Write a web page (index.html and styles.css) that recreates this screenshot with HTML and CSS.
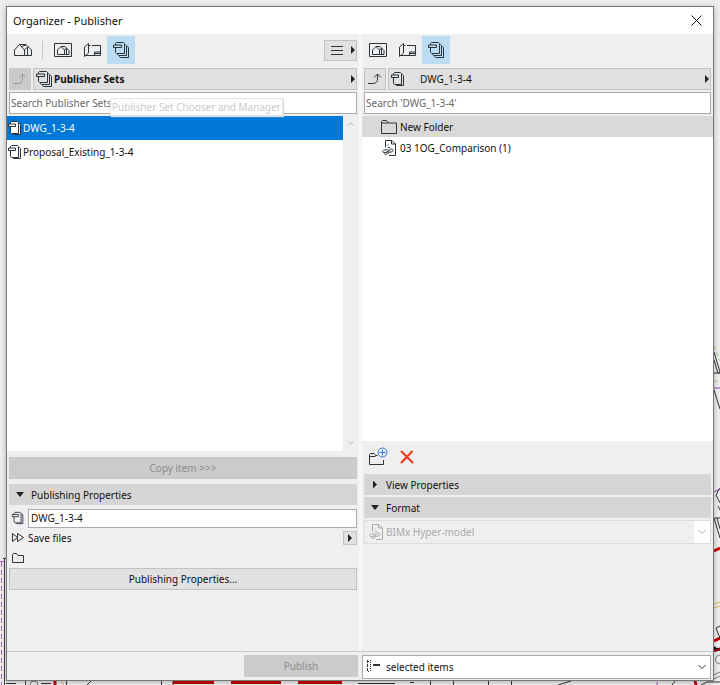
FILE: index.html
```html
<!DOCTYPE html>
<html lang="en">
<head>
  <meta charset="utf-8">
  <title>Organizer - Publisher</title>
  <link rel="stylesheet" href="styles.css">
</head>
<body>
  <svg class="symbols" aria-hidden="true">
    <symbol id="house" viewBox="0 0 20 16">
      <path d="M1.500 13.500V8L6.500 2.500L11.500 8v5.500zM6.500 2.500h6.500L18.500 8v5.500h-7M8.500 4.500L13 3M11.500 8L14.500 5v8.500"/>
    </symbol>
    <symbol id="view-map" viewBox="0 0 20 16">
      <path d="M1.500 1.500h17v13h-17zM4.500 12.500V8L8 4.500l3.500 3.500v4.500zM8 4.500h4L16 8.500v4h-4.500M11.500 8L13.500 6v6.500"/>
    </symbol>
    <symbol id="layout" viewBox="0 0 20 16">
      <path d="M6.500 1.500L2.500 5v9.500L6.500 11zM6.500 3.500h2M10 3.500h8.500v10H3.500M12.500 13.500v-3.500h6M12.500 11.500h6"/>
    </symbol>
    <symbol id="sets" viewBox="0 0 18 18">
      <path d="M3.500 4V2.500l1-1h7l1 1v10H4.500l-1-1V6.500M1.500 4h8v2.500h-8zM12.500 3.500h1l1 1v10h-8l-1-1v-1M14.500 5.500h1l1 1v10h-8l-1-1v-1"/>
    </symbol>
    <symbol id="set" viewBox="0 0 16 16">
      <path d="M3.500 4V2.500l1-1h6l1 1v11h-7l-1-1V6.500M1.500 4h7v2.500h-7zM11.500 3.500h1l1 1v10h-7l-1-1"/>
    </symbol>
    <symbol id="up" viewBox="0 0 16 14">
      <path d="M1 11.500h5c3 0 4.500-2 4.500-4.500V2M7 5.500l3.500-3.500 3.500 3.500"/>
    </symbol>
    <symbol id="folder" viewBox="0 0 18 16">
      <path d="M1.500 14.500v-12L2.500 1.500h4L8.500 4h8v10.500zM1.500 4h7"/>
    </symbol>
    <symbol id="hyper-model" viewBox="0 0 16 18">
      <path d="M4.500 8.500V1.500h6.500L14.500 5v11.500H8M10.500 1.500V5h4M7 5.500v1M7 8.500h2M8 11.500c-2-1.500-6.500-.5-6.500 1s4 1.500 5.500 0 2.500-3 4-2.500 1.500 3-1 3H8c-2 0-4.500 0-4.500 1.500s3 1.500 4.500-1.500"/>
    </symbol>
    <symbol id="chevron" viewBox="0 0 10 6">
      <path d="M1.500 1L5 4.500 8.500 1"/>
    </symbol>
  </svg>

  <svg class="drawing" viewBox="0 0 720 685" preserveAspectRatio="xMaxYMax slice" aria-hidden="true">
    <path stroke="#b45fd0" stroke-dasharray="5 3" d="M1.500 562v123M0 561.500h5"/>
    <path stroke="#444" d="M3 558.500h3M4.500 558v127"/>
    <path stroke="#333" d="M6 683.500h10M25.500 681v4M41 683.500h10M66.500 681v4M91 681l-4 4M161.500 681v4M173 681v4M358 683.500h37M410 682.500h4M430.500 681v4M453.500 681v4M488.500 681v4M511.500 681v4M558 685l13-4M672 685l3-4M701 685l6-3h13"/>
    <circle stroke="#777" cx="34" cy="685" r="4"/>
    <path stroke="#dbb04b" d="M61 681l3 4M206 683h4M714 608l6-2M714 604l6-2"/>
    <path stroke="#c90000" stroke-width="3" d="M55 681v4M173 682.500h41M231 682.500h50M298 682.500h44M695 681l1 4M714 551l6-3M714 641l6-3"/>
    <path stroke="#8dce63" stroke-dasharray="4 3" d="M714 346l6 15M714 382l6-3"/>
    <path stroke="#333" d="M714 352l6 20M714 360l4 13h2M714 390l6 19M714 373h6M720 488l-4 7 4 8M714 518h6M714 518l6 20M717 518l3 11M720 510l-2-4M720 626l-4 2 4 10"/>
    <path stroke="#9442b5" d="M714 388h6M714 492l6-3M657 682v3"/>
    <path stroke="#151515" stroke-width="3" d="M714 647l2 3 4-1"/>
    <path stroke="#a60010" stroke-width="2" d="M714 651l6-2"/>
    <path stroke="#777" d="M720 655c-5 0-7 8 0 9M714 675l6-3M714 679l6-3"/>
  </svg>

  <main class="window">
    <header class="title-bar">
      <h1>Organizer - Publisher</h1>
      <button class="close" aria-label="Close">
        <svg width="11" height="11" viewBox="0 0 11 11"><path d="M.5.5l10 10M10.500.5l-10 10"/></svg>
      </button>
    </header>

    <div class="panes">
      <section class="pane">
        <div class="toolbar">
          <button class="tool" aria-label="Project Map"><svg width="20" height="16"><use href="#house"/></svg></button>
          <span class="separator"></span>
          <button class="tool" aria-label="View Map"><svg width="20" height="16"><use href="#view-map"/></svg></button>
          <button class="tool" aria-label="Layout Book"><svg width="20" height="16"><use href="#layout"/></svg></button>
          <button class="tool active" aria-label="Publisher Sets"><svg width="18" height="18"><use href="#sets"/></svg></button>
          <button class="chooser" aria-label="Publisher Set Chooser and Manager">
            <svg width="12" height="10" viewBox="0 0 12 10"><path d="M0 1.500h12M0 5.500h12M0 9.500h12"/></svg>
            <span class="arrow-right"></span>
          </button>
        </div>
        <div class="path-row">
          <button class="up" disabled aria-label="Up one level"><svg width="16" height="14"><use href="#up"/></svg></button>
          <button class="path root">
            <svg width="18" height="18"><use href="#sets"/></svg>
            <span class="path-name">Publisher Sets</span>
            <span class="arrow-right"></span>
          </button>
        </div>
        <div class="search">
          <input type="search" placeholder="Search Publisher Sets" aria-label="Search Publisher Sets">
          <div class="tooltip" role="tooltip">Publisher Set Chooser and Manager</div>
        </div>
        <div class="list-box">
          <ul class="list set-list">
            <li class="selected"><svg width="16" height="16"><use href="#set"/></svg>DWG_1-3-4</li>
            <li><svg width="16" height="16"><use href="#set"/></svg>Proposal_Existing_1-3-4</li>
          </ul>
          <div class="scrollbar">
            <svg class="flip" width="8" height="6"><use href="#chevron"/></svg>
            <svg width="8" height="6"><use href="#chevron"/></svg>
          </div>
        </div>
        <div class="details">
          <button class="wide-button copy" disabled>Copy item &gt;&gt;&gt;</button>
          <button class="section-head"><span class="arrow-down"></span>Publishing Properties</button>
          <div class="property">
            <svg width="14" height="14"><use href="#set"/></svg>
            <input type="text" value="DWG_1-3-4" aria-label="Set name">
          </div>
          <div class="property">
            <svg width="14" height="12" viewBox="0 0 14 12"><path d="M1.500 1.500v8l5-4zM6.500 1.500v8l6-4z"/></svg>
            <span class="property-text">Save files</span>
            <button class="more" aria-label="Publishing method"><span class="arrow-right"></span></button>
          </div>
          <div class="property">
            <svg width="14" height="12" viewBox="0 0 14 12"><path d="M1.500 10.500v-8l1-1h3l1.500 2h5.500v7z"/></svg>
          </div>
          <button class="wide-button">Publishing Properties...</button>
        </div>
      </section>

      <section class="pane right">
        <div class="toolbar">
          <button class="tool" aria-label="View Map"><svg width="20" height="16"><use href="#view-map"/></svg></button>
          <button class="tool" aria-label="Layout Book"><svg width="20" height="16"><use href="#layout"/></svg></button>
          <button class="tool active" aria-label="Publisher Sets"><svg width="18" height="18"><use href="#sets"/></svg></button>
        </div>
        <div class="path-row">
          <button class="up" aria-label="Up one level"><svg width="16" height="14"><use href="#up"/></svg></button>
          <button class="path">
            <svg width="16" height="16"><use href="#set"/></svg>
            <span class="path-name">DWG_1-3-4</span>
            <span class="arrow-right"></span>
          </button>
        </div>
        <div class="search">
          <input type="search" placeholder="Search 'DWG_1-3-4'" aria-label="Search DWG_1-3-4">
        </div>
        <div class="list-box">
          <ul class="list item-list">
            <li class="target"><svg width="18" height="16"><use href="#folder"/></svg>New Folder</li>
            <li><svg width="18" height="18"><use href="#hyper-model"/></svg>03 1OG_Comparison (1)</li>
          </ul>
        </div>
        <div class="details">
          <div class="actions">
            <button aria-label="New folder">
              <svg width="20" height="20" viewBox="0 0 20 20">
                <path d="M9.500 8.500H7.500L6 6.500H2.500l-1 1v10h14V13M1.500 9.500h6"/>
                <circle class="plus" cx="14.500" cy="5.500" r="4.500"/>
                <path class="plus" d="M14.500 2.500v6M11.500 5.500h6"/>
              </svg>
            </button>
            <button aria-label="Delete">
              <svg width="14" height="14" viewBox="0 0 14 14"><path class="delete" d="M1 1l12 12M12.500 1L1 13"/></svg>
            </button>
          </div>
          <button class="section-head"><span class="arrow-right"></span>View Properties</button>
          <button class="section-head"><span class="arrow-down"></span>Format</button>
          <div class="dropdown format">
            <svg class="dropdown-icon" width="16" height="18"><use href="#hyper-model"/></svg>
            <select disabled aria-label="Format"><option>BIMx Hyper-model</option></select>
            <span class="dropdown-arrow"><svg width="10" height="6"><use href="#chevron"/></svg></span>
          </div>
        </div>
      </section>
    </div>

    <footer class="footer">
      <div class="footer-left">
        <button class="publish" disabled>Publish</button>
      </div>
      <div class="dropdown">
        <svg class="dropdown-icon" width="16" height="14" viewBox="0 0 16 14">
          <path d="M1.500 1v12" stroke-dasharray="3 1"/>
          <path d="M4.500 1v12M2 2.500h2M2 12.500h2" stroke-dasharray="1 1"/>
          <path d="M7 6h7" stroke-width="2"/>
        </svg>
        <select aria-label="Items to publish"><option>selected items</option><option>entire set</option></select>
        <span class="dropdown-arrow"><svg width="10" height="6"><use href="#chevron"/></svg></span>
      </div>
    </footer>
  </main>
</body>
</html>
```

FILE: styles.css
```css
* {
  box-sizing: border-box;
}

body {
  display: flex;
  min-height: 100vh;
  margin: 0;
  padding: 6px 6px 4px;
  background: #f0f0f0;
  color: #111;
  font-family: "Noto Sans", "Open Sans", sans-serif;
  font-size: 10px;
  line-height: 16px;
}

button,
input,
select {
  margin: 0;
  padding: 0;
  border: 0;
  border-radius: 0;
  background: none;
  color: inherit;
  font: inherit;
}

svg {
  flex: none;
  fill: none;
  stroke: #2b333b;
}

.symbols {
  position: absolute;
  width: 0;
  height: 0;
}

.drawing {
  position: absolute;
  inset: 0;
  width: 100%;
  height: 100%;
}

.window {
  position: relative;
  display: flex;
  flex: 1;
  flex-direction: column;
  min-width: 0;
  border: 1px solid #777;
  background: #efefef;
  box-shadow: 0 1px 6px rgba(0, 0, 0, 0.3);
}

.title-bar {
  display: flex;
  align-items: center;
  justify-content: space-between;
  height: 27px;
  padding: 0 11px 0 6px;
  background: #fff;
}

h1 {
  margin: 0;
  font-size: 11px;
  font-weight: normal;
}

.close {
  display: flex;
}

.close svg {
  stroke: #111;
}

/* panes */

.panes {
  display: grid;
  flex: 1;
  grid-template-columns: calc(50% - 1px) 1fr;
}

.pane {
  display: flex;
  flex-direction: column;
  min-width: 0;
  padding: 0 2px;
}

.pane.right {
  border-left: 3px solid #f7f7f7;
}

.toolbar {
  display: flex;
  align-items: center;
  gap: 1px;
  height: 32px;
}

.tool {
  display: flex;
  align-items: center;
  justify-content: center;
  width: 28px;
  height: 28px;
}

.tool.active {
  background: #bcdcf4;
}

.separator {
  width: 1px;
  height: 18px;
  margin: 0 5px 0 4px;
  background: #c6c6c6;
}

.chooser {
  display: flex;
  align-items: center;
  justify-content: space-between;
  width: 33px;
  height: 21px;
  margin-left: auto;
  padding: 0 1px 0 6px;
  border: 1px solid #c2c2c2;
  background: #e1e1e1;
}

.arrow-right {
  flex: none;
  width: 4px;
  height: 8px;
  background: #222;
  clip-path: polygon(0 0, 100% 50%, 0 100%);
}

.arrow-down {
  flex: none;
  width: 8px;
  height: 5px;
  background: #222;
  clip-path: polygon(0 0, 100% 0, 50% 100%);
}

.path-row {
  display: flex;
  gap: 2px;
  margin-top: 2px;
}

.up,
.path {
  display: flex;
  align-items: center;
  height: 22px;
  border: 1px solid #c2c2c2;
  background: #e0e0e0;
}

.up {
  justify-content: center;
  width: 22px;
}

.up:disabled {
  border-color: #cacaca;
  background: #cacaca;
}

.up:disabled svg {
  stroke: #999;
}

.path {
  flex: 1;
  gap: 14px;
  padding: 0 1px;
}

.path.root {
  gap: 1px;
  font-weight: bold;
}

.path-name {
  flex: 1;
  text-align: left;
}

.search {
  position: relative;
  margin: 2px 0;
}

.search input {
  display: block;
  width: 100%;
  height: 22px;
  padding: 0 1px;
  border: 1px solid #aaa;
  background: #fff;
  appearance: none;
}

.search input::placeholder {
  color: #666;
  opacity: 1;
}

.tooltip {
  position: absolute;
  top: 6px;
  left: 101px;
  padding: 0 1px;
  border: 1px solid #e2e2e2;
  background: #fff;
  box-shadow: 1px 1px 1px #ddd;
  color: #c9c9c9;
  white-space: nowrap;
}

.list-box {
  display: flex;
  flex: 1;
  margin: 0 -2px;
  background: #fff;
}

.list {
  flex: 1;
  margin: 0;
  padding: 0;
  list-style: none;
}

.list li {
  display: flex;
  align-items: center;
}

.set-list li {
  height: 24px;
}

.set-list svg {
  fill: #fff;
}

.set-list .selected {
  background: #0078d7;
  color: #fff;
}

.item-list li {
  gap: 2px;
  height: 21px;
  padding-left: 18px;
}

.item-list .target {
  background: #d9d9d9;
}

.scrollbar {
  display: flex;
  flex-direction: column;
  align-items: center;
  justify-content: space-between;
  width: 16px;
  padding: 5px 0;
  background: #efefef;
}

.scrollbar svg {
  stroke: #aaa;
}

.flip {
  transform: rotate(180deg);
}

/* lower part of each pane */

.details {
  display: flex;
  flex-direction: column;
  min-height: 200px;
  padding-top: 6px;
}

.right .details {
  gap: 2px;
  min-height: 210px;
  padding-top: 0;
}

.wide-button {
  height: 22px;
  border: 1px solid #c2c2c2;
  background: #e1e1e1;
}

.copy {
  margin-bottom: 5px;
  border-color: #c8c8c8;
  background: #cbcbcb;
  color: #8b8b8b;
}

.section-head {
  display: flex;
  align-items: center;
  height: 21px;
  padding-left: 7px;
  background: #d5d5d5;
  text-align: left;
}

.section-head .arrow-down {
  margin-right: 7px;
}

.section-head .arrow-right {
  margin: 0 9px 0 2px;
}

.pane:not(.right) .section-head {
  margin-bottom: 3px;
}

.property {
  display: flex;
  align-items: center;
  gap: 3px;
  height: 20px;
  padding-left: 2px;
}

.property input {
  flex: 1;
  min-width: 0;
  height: 19px;
  padding: 0 2px;
  border: 1px solid #aaa;
  background: #fff;
}

.property-text {
  flex: 1;
}

.more {
  display: flex;
  align-items: center;
  justify-content: center;
  width: 14px;
  height: 14px;
  border: 1px solid #c2c2c2;
  background: #e1e1e1;
}

.actions {
  display: flex;
  align-items: center;
  gap: 12px;
  height: 31px;
  padding-left: 4px;
}

.actions button {
  display: flex;
}

.actions .plus {
  stroke: #2878dc;
}

.actions .delete {
  stroke: #f03a1c;
  stroke-width: 2;
}

/* drop-downs */

.dropdown {
  position: relative;
  height: 24px;
  border: 1px solid #aaa;
  background: #fff;
}

.dropdown select {
  display: block;
  width: 100%;
  height: 22px;
  padding: 0 20px 0 23px;
  appearance: none;
  opacity: 1;
}

.dropdown-icon {
  position: absolute;
  top: 3px;
  left: 3px;
}

.dropdown-arrow {
  position: absolute;
  top: 0;
  right: 0;
  display: flex;
  align-items: center;
  justify-content: center;
  width: 16px;
  height: 100%;
  background: #fff;
}

.dropdown.format {
  border-color: #dcdcdc;
  background: #efefef;
  color: #aaa;
}

.format select {
  padding-left: 21px;
}

.format svg {
  stroke: #aaa;
}

.format .dropdown-icon {
  top: 2px;
}

.footer {
  display: grid;
  grid-template-columns: 1fr 1fr;
  gap: 4px;
  height: 29px;
  padding: 3px 2px 0;
  border-top: 1px solid #c8c8c8;
}

.footer-left {
  display: flex;
  justify-content: flex-end;
}

.publish {
  width: 114px;
  height: 22px;
  background: #cbcbcb;
  color: #8b8b8b;
}
```
